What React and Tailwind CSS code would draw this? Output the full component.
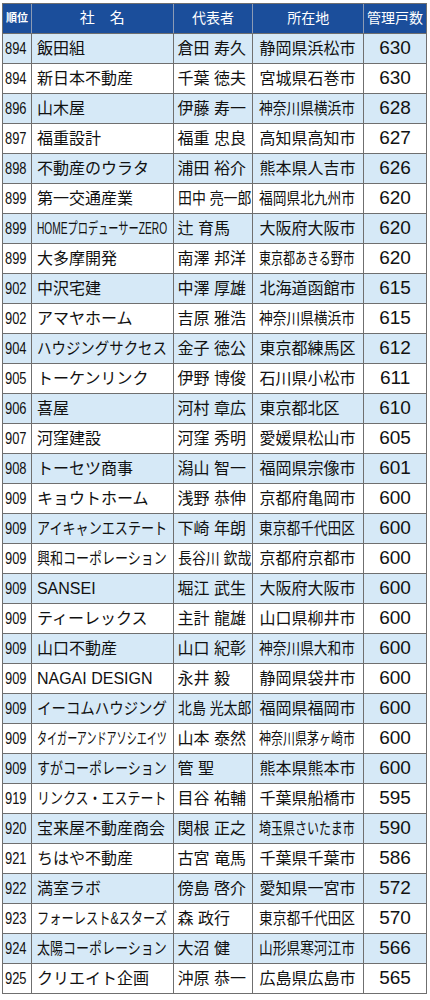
import React, { useLayoutEffect, useRef, useState } from "react";

const rows = [
  ["894", "飯田組", "倉田 寿久", "静岡県浜松市", "630"],
  ["894", "新日本不動産", "千葉 徳夫", "宮城県石巻市", "630"],
  ["896", "山木屋", "伊藤 寿一", "神奈川県横浜市", "628"],
  ["897", "福重設計", "福重 忠良", "高知県高知市", "627"],
  ["898", "不動産のウラタ", "浦田 裕介", "熊本県人吉市", "626"],
  ["899", "第一交通産業", "田中 亮一郎", "福岡県北九州市", "620"],
  ["899", "HOMEプロデューサーZERO", "辻 育馬", "大阪府大阪市", "620"],
  ["899", "大多摩開発", "南澤 邦洋", "東京都あきる野市", "620"],
  ["902", "中沢宅建", "中澤 厚雄", "北海道函館市", "615"],
  ["902", "アマヤホーム", "吉原 雅浩", "神奈川県横浜市", "615"],
  ["904", "ハウジングサクセス", "金子 徳公", "東京都練馬区", "612"],
  ["905", "トーケンリンク", "伊野 博俊", "石川県小松市", "611"],
  ["906", "喜屋", "河村 章広", "東京都北区", "610"],
  ["907", "河窪建設", "河窪 秀明", "愛媛県松山市", "605"],
  ["908", "トーセツ商事", "潟山 智一", "福岡県宗像市", "601"],
  ["909", "キョウトホーム", "浅野 恭伸", "京都府亀岡市", "600"],
  ["909", "アイキャンエステート", "下崎 年朗", "東京都千代田区", "600"],
  ["909", "興和コーポレーション", "長谷川 欽哉", "京都府京都市", "600"],
  ["909", "SANSEI", "堀江 武生", "大阪府大阪市", "600"],
  ["909", "ティーレックス", "主計 龍雄", "山口県柳井市", "600"],
  ["909", "山口不動産", "山口 紀彰", "神奈川県大和市", "600"],
  ["909", "NAGAI DESIGN", "永井 毅", "静岡県袋井市", "600"],
  ["909", "イーコムハウジング", "北島 光太郎", "福岡県福岡市", "600"],
  ["909", "タイガーアンドアソシエイツ", "山本 泰然", "神奈川県茅ヶ崎市", "600"],
  ["909", "すがコーポレーション", "管 聖", "熊本県熊本市", "600"],
  ["919", "リンクス・エステート", "目谷 祐輔", "千葉県船橋市", "595"],
  ["920", "宝来屋不動産商会", "関根 正之", "埼玉県さいたま市", "590"],
  ["921", "ちはや不動産", "古宮 竜馬", "千葉県千葉市", "586"],
  ["922", "満室ラボ", "傍島 啓介", "愛知県一宮市", "572"],
  ["923", "フォーレスト&スターズ", "森 政行", "東京都千代田区", "570"],
  ["924", "太陽コーポレーション", "大沼 健", "山形県寒河江市", "566"],
  ["925", "クリエイト企画", "沖原 恭一", "広島県広島市", "565"],
];

// squeeze long text into the cell like the printed table does
function Fit({ children, max }) {
  const ref = useRef(null);
  const [s, setS] = useState(1);
  useLayoutEffect(() => {
    const w = ref.current.scrollWidth;
    setS(w > max ? max / w : 1);
  }, [max, children]);
  return (
    <span
      ref={ref}
      className="inline-block whitespace-nowrap origin-left"
      style={{ transform: `scaleX(${s})` }}
    >
      {children}
    </span>
  );
}

export default function App() {
  return (
    <div
      className="w-[430px] h-[1000px] bg-white pt-[3px] pl-[2px]"
      style={{ fontFamily: '"Liberation Sans", "Noto Sans CJK JP", sans-serif' }}
    >
      <div className="w-[425px] border-t border-l border-[#6f6f6f]">
        <div className="flex h-[30px] bg-[#1b4e9b] text-white border-b border-[#6f6f6f]">
          <div className="w-[29px] border-r border-[#8c9bb5] flex items-center justify-center text-[11px] font-bold">
            順位
          </div>
          <div className="w-[142px] border-r border-[#8c9bb5] flex items-center justify-center text-[15px]">
            社　名
          </div>
          <div className="w-[80px] border-r border-[#8c9bb5] flex items-center justify-center text-[14px]">
            代表者
          </div>
          <div className="w-[111px] border-r border-[#8c9bb5] flex items-center justify-center text-[14px]">
            所在地
          </div>
          <div className="w-[63px] border-r border-[#6f6f6f] flex items-center justify-center text-[14px]">
            管理戸数
          </div>
        </div>
        {rows.map((r, i) => (
          <div
            key={i}
            className={`flex h-[30px] border-b border-[#6f6f6f] text-[#111] ${
              i % 2 === 0 ? "bg-[#d6e9f7]" : "bg-white"
            }`}
          >
            <div className="w-[29px] border-r border-[#6f6f6f] flex items-center pl-[2px] overflow-hidden text-[17px]">
              <span className="inline-block origin-left scale-x-[0.76]">{r[0]}</span>
            </div>
            <div className="w-[142px] border-r border-[#6f6f6f] flex items-center pl-[5px] overflow-hidden text-[16px]">
              <Fit max={130}>{r[1]}</Fit>
            </div>
            <div className="w-[80px] border-r border-[#6f6f6f] flex items-center pl-[4px] overflow-hidden text-[16px]">
              <Fit max={73}>{r[2]}</Fit>
            </div>
            <div className="w-[111px] border-r border-[#6f6f6f] flex items-center pl-[6px] overflow-hidden text-[16px]">
              <Fit max={96}>{r[3]}</Fit>
            </div>
            <div className="w-[63px] border-r border-[#6f6f6f] flex items-center justify-center text-[19px]">
              {r[4]}
            </div>
          </div>
        ))}
      </div>
    </div>
  );
}
